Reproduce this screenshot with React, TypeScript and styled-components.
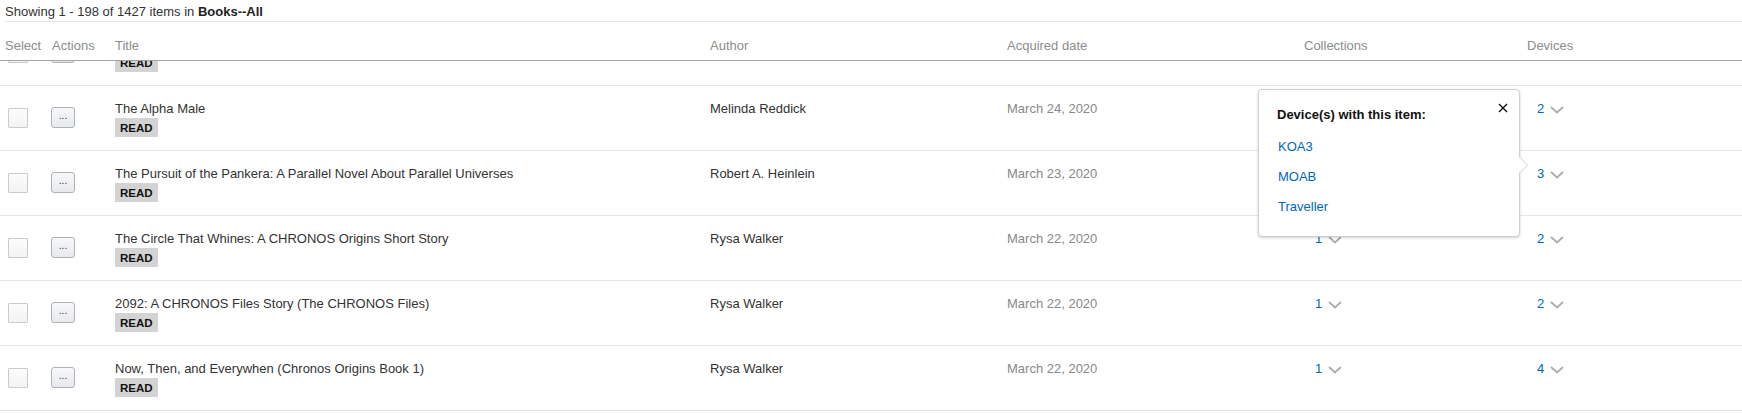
import React from "react";
import styled, { createGlobalStyle } from "styled-components";

type Book = {
  title: string;
  author: string;
  date: string;
  collections: number | null;
  devices: number | null;
};

// first entry is the row scrolled half under the sticky header
const books: Book[] = [
  { title: "", author: "", date: "", collections: null, devices: null },
  { title: "The Alpha Male", author: "Melinda Reddick", date: "March 24, 2020", collections: null, devices: 2 },
  {
    title: "The Pursuit of the Pankera: A Parallel Novel About Parallel Universes",
    author: "Robert A. Heinlein",
    date: "March 23, 2020",
    collections: null,
    devices: 3,
  },
  {
    title: "The Circle That Whines: A CHRONOS Origins Short Story",
    author: "Rysa Walker",
    date: "March 22, 2020",
    collections: 1,
    devices: 2,
  },
  {
    title: "2092: A CHRONOS Files Story (The CHRONOS Files)",
    author: "Rysa Walker",
    date: "March 22, 2020",
    collections: 1,
    devices: 2,
  },
  {
    title: "Now, Then, and Everywhen (Chronos Origins Book 1)",
    author: "Rysa Walker",
    date: "March 22, 2020",
    collections: 1,
    devices: 4,
  },
];

const deviceNames = ["KOA3", "MOAB", "Traveller"];

const Chevron = () => (
  <svg width="14" height="8" viewBox="0 0 14 8" fill="none">
    <path d="M1 1l6 5.5L13 1" stroke="#acacac" strokeWidth="1.8" />
  </svg>
);

export default function App() {
  return (
    <Page>
      <GlobalStyle />
      <Summary>
        Showing 1 - 198 of 1427 items in <b>Books--All</b>
      </Summary>
      <HeaderRow>
        <HeadCell>Select</HeadCell>
        <HeadCell>Actions</HeadCell>
        <HeadCell>Title</HeadCell>
        <HeadCell>Author</HeadCell>
        <HeadCell>Acquired date</HeadCell>
        <HeadCell>Collections</HeadCell>
        <HeadCell>Devices</HeadCell>
      </HeaderRow>
      <Body>
        <Scroller>
          {books.map((b, i) => (
            <Row key={i}>
              <CheckCell>
                <CheckBox />
              </CheckCell>
              <ActionCell>
                <MoreBtn>{i > 0 ? "..." : ""}</MoreBtn>
              </ActionCell>
              <Cell>
                <TitleText>{b.title || "\u00a0"}</TitleText>
                <Badge>READ</Badge>
              </Cell>
              <Cell>{b.author}</Cell>
              <Cell $muted>{b.date}</Cell>
              <CountCell>
                {b.collections !== null && (
                  <>
                    <Count>{b.collections}</Count>
                    <Chevron />
                  </>
                )}
              </CountCell>
              <CountCell $left={15}>
                {b.devices !== null && (
                  <>
                    <Count>{b.devices}</Count>
                    <Chevron />
                  </>
                )}
              </CountCell>
            </Row>
          ))}
        </Scroller>
      </Body>
      <Popover>
        <CloseBtn>
          <svg width="10" height="10" viewBox="0 0 10 10">
            <path d="M1 1l8 8M9 1L1 9" stroke="#111" strokeWidth="1.4" />
          </svg>
        </CloseBtn>
        <PopTitle>Device(s) with this item:</PopTitle>
        <DeviceList>
          {deviceNames.map((d) => (
            <DeviceLink key={d}>{d}</DeviceLink>
          ))}
        </DeviceList>
      </Popover>
    </Page>
  );
}

const GlobalStyle = createGlobalStyle`
  html, body {
    margin: 0;
    padding: 0;
    background: #fff;
  }
  body {
    font-family: "Liberation Sans", Arial, sans-serif;
    font-size: 13px;
    color: #333;
  }
`;

const Page = styled.div`
  position: relative;
  height: 413px;
  overflow: hidden;
`;

const Summary = styled.div`
  margin-left: 5px;
  padding-top: 3px;
  line-height: 18px;
  border-bottom: 1px solid #e4e4e4;
  color: #333;
  b {
    color: #222;
  }
`;

const columns = "47px 63px 595px 297px 297px 223px 1fr";

const HeaderRow = styled.div`
  display: grid;
  grid-template-columns: ${columns};
  height: 38px;
  border-bottom: 1px solid #a3a3a3;
  background: #fff;
  position: relative;
  z-index: 1;
`;

const HeadCell = styled.div`
  padding: 15px 0 0 5px;
  line-height: 18px;
  color: #8c8c8c;
  white-space: nowrap;
`;

const Body = styled.div`
  overflow: hidden;
`;

const Scroller = styled.div`
  margin-top: -40px;
`;

const Row = styled.div`
  display: grid;
  grid-template-columns: ${columns};
  height: 64px;
  border-bottom: 1px solid #e5e5e5;
`;

const Cell = styled.div<{ $muted?: boolean }>`
  padding: 14px 0 0 5px;
  line-height: 18px;
  color: ${(p) => (p.$muted ? "#888" : "#333")};
  white-space: nowrap;
`;

const TitleText = styled.div`
  color: #333;
`;

const Badge = styled.span`
  display: inline-block;
  padding: 0 5px;
  height: 19px;
  line-height: 20px;
  background: #d3d3d3;
  color: #111;
  font-size: 11.5px;
  font-weight: bold;
`;

const CheckCell = styled.div`
  padding: 22px 0 0 8px;
`;

const CheckBox = styled.div`
  width: 18px;
  height: 18px;
  border: 1px solid #cbcbcb;
  border-radius: 1px;
  background: linear-gradient(#fcfcfc, #f3f3f3);
`;

const ActionCell = styled.div`
  padding: 21px 0 0 4px;
`;

const MoreBtn = styled.button`
  display: block;
  width: 24px;
  height: 21px;
  padding: 0 0 4px;
  border: 1px solid #adb1b8;
  border-radius: 3px;
  background: linear-gradient(#f7f8fa, #e7e9ec);
  font-family: "Liberation Sans", Arial, sans-serif;
  font-size: 10px;
  line-height: 10px;
  color: #333;
`;

const CountCell = styled.div<{ $left?: number }>`
  display: flex;
  align-items: flex-start;
  gap: 6px;
  padding: 14px 0 0 ${(p) => p.$left ?? 16}px;
  line-height: 18px;
  svg {
    margin-top: 6px;
  }
`;

const Count = styled.span`
  color: #0066c0;
`;

const Popover = styled.div`
  position: absolute;
  left: 1258px;
  top: 89px;
  width: 260px;
  height: 146px;
  box-sizing: content-box;
  border: 1px solid #cfcfcf;
  border-radius: 4px;
  background: #fff;
  box-shadow: 0 1px 3px rgba(0, 0, 0, 0.18);
  z-index: 2;
  &::before,
  &::after {
    content: "";
    position: absolute;
    top: 66px;
    border-style: solid;
    border-color: transparent;
  }
  &::before {
    right: -9px;
    border-width: 9px 0 9px 9px;
    border-left-color: #cfcfcf;
  }
  &::after {
    right: -8px;
    border-width: 9px 0 9px 9px;
    border-left-color: #fff;
  }
`;

const CloseBtn = styled.div`
  position: absolute;
  top: 13px;
  right: 11px;
  width: 10px;
  height: 10px;
  line-height: 0;
`;

const PopTitle = styled.div`
  padding: 16px 0 0 18px;
  line-height: 18px;
  font-weight: bold;
  color: #111;
`;

const DeviceList = styled.div`
  display: flex;
  flex-direction: column;
  margin-top: 8px;
  padding-left: 19px;
`;

const DeviceLink = styled.a`
  line-height: 30px;
  color: #0066c0;
  text-decoration: none;
  cursor: pointer;
`;
